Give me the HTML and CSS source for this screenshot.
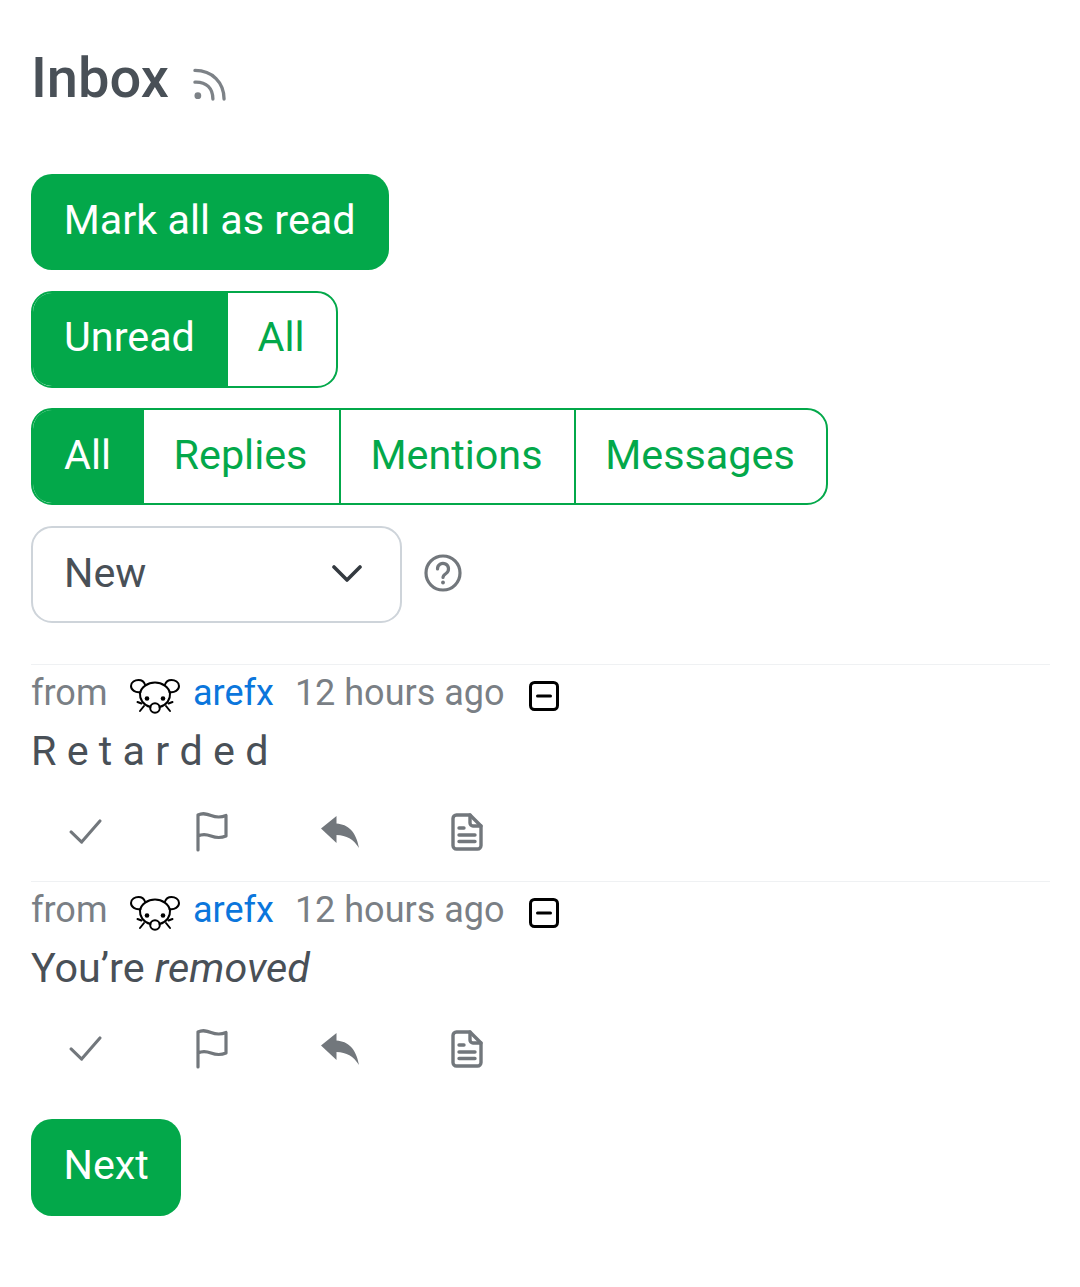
FILE: index.html
```html
<!DOCTYPE html>
<html lang="en">
<head>
<meta charset="utf-8">
<title>Inbox</title>
<link rel="stylesheet" href="styles.css">
</head>
<body>
<main class="page">
  <header class="title-row">
    <h1 class="title">Inbox</h1>
    <svg class="rss" viewBox="0 0 34 34" fill="none" stroke="#7d8287" stroke-width="3.4" stroke-linecap="round"><path d="M2 14.500C14 14 20.500 21 20.500 32"/><path d="M2 2.500C20 2.500 32 15 32 32"/><circle cx="5" cy="28.500" r="3.500" fill="#7d8287" stroke="none"/></svg>
  </header>

  <div class="controls">
    <button class="btn solid">Mark all as read</button>
    <div class="group">
      <span class="seg active seg-unread">Unread</span><span class="seg seg-all">All</span>
    </div>
    <div class="group">
      <span class="seg active seg-all2">All</span><span class="seg seg-replies">Replies</span><span class="seg seg-mentions">Mentions</span><span class="seg seg-messages">Messages</span>
    </div>
    <div class="sort-row">
      <div class="select">
        <span>New</span>
        <svg class="chev" viewBox="0 0 30 18" fill="none" stroke="#343a40" stroke-width="3.600" stroke-linecap="round" stroke-linejoin="round"><path d="M2 3l13 13L28 3"/></svg>
      </div>
      <svg class="help" viewBox="0 0 38 38" fill="none" stroke="#72777c" stroke-width="3.200" stroke-linecap="round"><circle cx="19" cy="19" r="17"/><path d="M13.500 15a5.500 5.500 0 1 1 8.500 4.500c-1.800 1.200-3 2.200-3 4"/><circle cx="19" cy="28.500" r="1.900" fill="#72777c" stroke="none"/></svg>
    </div>
  </div>

  <section class="messages">
    <article class="msg">
      <div class="meta">
        <span class="from">from</span>
        <svg class="avatar" viewBox="0 0 52 36" fill="none" stroke="#000" stroke-width="2" stroke-linecap="round"><path d="M11.500 14C6.500 15 2 12 2 8 2 4 6 2 9.500 2c3 0 5.500 1.500 6.500 4.500"/><path d="M40.500 14C45.500 15 50 12 50 8c0-4-4-6-7.500-6-3 0-5.500 1.500-6.500 4.500"/><path d="M21.500 29C14 27 10.500 21 11 15.500 12 9 19 4.500 26 4.500S40 9 41 15.500C41.500 21 38 27 30.500 29"/><circle cx="26" cy="30" r="4.800"/><circle cx="18" cy="20.500" r="2.300" fill="#000" stroke="none"/><circle cx="34" cy="20.500" r="2.300" fill="#000" stroke="none"/><path d="M12.500 25.500l-4-1.500M15 28l-4 5M39.500 25.500l4-1.500M37 28l4 5"/></svg>
        <a class="user" href="#">arefx</a>
        <span class="time">12 hours ago</span>
        <svg class="minus" viewBox="0 0 30 30" fill="none" stroke="#000" stroke-width="3" stroke-linecap="round"><rect x="1.500" y="1.500" width="27" height="27" rx="4"/><path d="M8.500 15h13"/></svg>
      </div>
      <p class="body">R e t a r d e d</p>
      <div class="actions">
        <span class="act"><svg class="ic-check" viewBox="0 0 34 26" fill="none" stroke="#72777c" stroke-width="3.200" stroke-linecap="round" stroke-linejoin="round"><path d="M2 13.500l11 10.500L32 2"/></svg></span>
        <span class="act"><svg class="ic-flag" viewBox="0 0 34 40" fill="none" stroke="#72777c" stroke-width="3.200" stroke-linecap="round" stroke-linejoin="round"><path d="M3 38V3c5-2.500 9-1 13 .5s9 2.500 15 0V24c-6 2.500-11 1.500-15 0S8 21.500 3 24"/></svg></span>
        <span class="act"><svg class="ic-reply" viewBox="0 0 38 34" fill="#72777c"><path d="M0 13.500 15.500 1v7.500C27 9.500 35 16 38 33 32.500 24 25.500 20.500 15.500 20v8z"/></svg></span>
        <span class="act"><svg class="ic-doc" viewBox="0 0 32 38" fill="none" stroke="#72777c" stroke-width="3.400" stroke-linecap="round" stroke-linejoin="round"><path d="M19 2H5.500A3.500 3.500 0 0 0 2 5.500v27A3.500 3.500 0 0 0 5.500 36h21a3.500 3.500 0 0 0 3.500-3.500V13z"/><path d="M19 2v8a3 3 0 0 0 3 3h8"/><path d="M8 15h5M8 22h16M8 28.500h16"/></svg></span>
      </div>
    </article>

    <article class="msg">
      <div class="meta">
        <span class="from">from</span>
        <svg class="avatar" viewBox="0 0 52 36" fill="none" stroke="#000" stroke-width="2" stroke-linecap="round"><path d="M11.500 14C6.500 15 2 12 2 8 2 4 6 2 9.500 2c3 0 5.500 1.500 6.500 4.500"/><path d="M40.500 14C45.500 15 50 12 50 8c0-4-4-6-7.500-6-3 0-5.500 1.500-6.500 4.500"/><path d="M21.500 29C14 27 10.500 21 11 15.500 12 9 19 4.500 26 4.500S40 9 41 15.500C41.500 21 38 27 30.500 29"/><circle cx="26" cy="30" r="4.800"/><circle cx="18" cy="20.500" r="2.300" fill="#000" stroke="none"/><circle cx="34" cy="20.500" r="2.300" fill="#000" stroke="none"/><path d="M12.500 25.500l-4-1.500M15 28l-4 5M39.500 25.500l4-1.500M37 28l4 5"/></svg>
        <a class="user" href="#">arefx</a>
        <span class="time">12 hours ago</span>
        <svg class="minus" viewBox="0 0 30 30" fill="none" stroke="#000" stroke-width="3" stroke-linecap="round"><rect x="1.500" y="1.500" width="27" height="27" rx="4"/><path d="M8.500 15h13"/></svg>
      </div>
      <p class="body">You’re <em>removed</em></p>
      <div class="actions">
        <span class="act"><svg class="ic-check" viewBox="0 0 34 26" fill="none" stroke="#72777c" stroke-width="3.200" stroke-linecap="round" stroke-linejoin="round"><path d="M2 13.500l11 10.500L32 2"/></svg></span>
        <span class="act"><svg class="ic-flag" viewBox="0 0 34 40" fill="none" stroke="#72777c" stroke-width="3.200" stroke-linecap="round" stroke-linejoin="round"><path d="M3 38V3c5-2.500 9-1 13 .5s9 2.500 15 0V24c-6 2.500-11 1.500-15 0S8 21.500 3 24"/></svg></span>
        <span class="act"><svg class="ic-reply" viewBox="0 0 38 34" fill="#72777c"><path d="M0 13.500 15.500 1v7.500C27 9.500 35 16 38 33 32.500 24 25.500 20.500 15.500 20v8z"/></svg></span>
        <span class="act"><svg class="ic-doc" viewBox="0 0 32 38" fill="none" stroke="#72777c" stroke-width="3.400" stroke-linecap="round" stroke-linejoin="round"><path d="M19 2H5.500A3.500 3.500 0 0 0 2 5.500v27A3.500 3.500 0 0 0 5.500 36h21a3.500 3.500 0 0 0 3.500-3.500V13z"/><path d="M19 2v8a3 3 0 0 0 3 3h8"/><path d="M8 15h5M8 22h16M8 28.500h16"/></svg></span>
      </div>
    </article>
  </section>

  <button class="btn solid next">Next</button>
</main>
</body>
</html>
```

FILE: styles.css
```css
* { box-sizing: border-box; }
html, body { margin: 0; background: #fff; }
body { font-family: Roboto, "Liberation Sans", sans-serif; color: #495057; font-size: 41.3px; }
.page { padding: 40px 30px 0 31px; height: 1287px; overflow: hidden; }

.title-row { display: flex; align-items: flex-end; height: 76px; margin-bottom: 58px; }
.title { margin: 0; font-size: 56px; font-weight: 500; line-height: 76px; color: #495057; }
.rss { width: 33px; height: 33px; margin-left: 24.5px; margin-bottom: 15px; }

.controls { display: flex; flex-direction: column; align-items: flex-start; gap: 20.5px; }
.btn { font: inherit; height: 96px; border-radius: 21px; border: 0; padding: 0 33px 5px 32.8px; }
.solid { background: #03a84a; color: #fff; }

.group { display: flex; height: 97px; border: 2px solid #03a84a; border-radius: 21px; overflow: hidden; color: #03a84a; }
.seg { display: flex; align-items: center; justify-content: center; height: 100%; padding: 0 2px 4px 0; }
.seg.active { background: #03a84a; color: #fff; }
.seg-mentions, .seg-messages { border-left: 2px solid #03a84a; }
.seg-unread { width: 195px; }
.seg-all { width: 108px; }
.seg-all2 { width: 111px; }
.seg-replies { width: 195px; }
.seg-mentions { width: 235px; }
.seg-messages { width: 252px; }

.sort-row { display: flex; align-items: center; gap: 22px; }
.select { display: flex; align-items: center; justify-content: space-between; width: 371px; height: 97px; border: 2px solid #ced4da; border-radius: 21px; padding: 0 38px 3px 31px; }
.chev { width: 30px; height: 18px; }
.help { width: 38px; height: 38px; margin-bottom: 3px; }

.messages { margin-top: 41.5px; }
.msg { height: 217px; border-top: 1px solid #eff1f3; }
.meta { display: flex; align-items: center; height: 55px; font-size: 36px; color: #7a7f85; }
.avatar { width: 52px; height: 36px; margin-left: 21.5px; margin-top: 6px; }
.user { color: #0b76dc; text-decoration: none; margin-left: 12px; }
.time { margin-left: 21px; }
.minus { width: 30px; height: 30px; margin-left: 24px; margin-top: 7px; }
.body { margin: 0; height: 60px; padding-top: 1px; line-height: 60px; font-size: 41.3px; }
.actions { display: flex; margin-left: -9.5px; height: 101px; padding-top: 2px; align-items: center; }
.act { display: flex; align-items: center; justify-content: center; width: 127.3px; height: 100%; }
.ic-check { width: 33px; height: 25px; }
.ic-flag { width: 34px; height: 40px; }
.ic-reply { width: 38px; height: 34px; }
.ic-doc { width: 32px; height: 38px; }

.next { margin-top: 21px; height: 97px; padding: 0 32.5px 5px; }
```
